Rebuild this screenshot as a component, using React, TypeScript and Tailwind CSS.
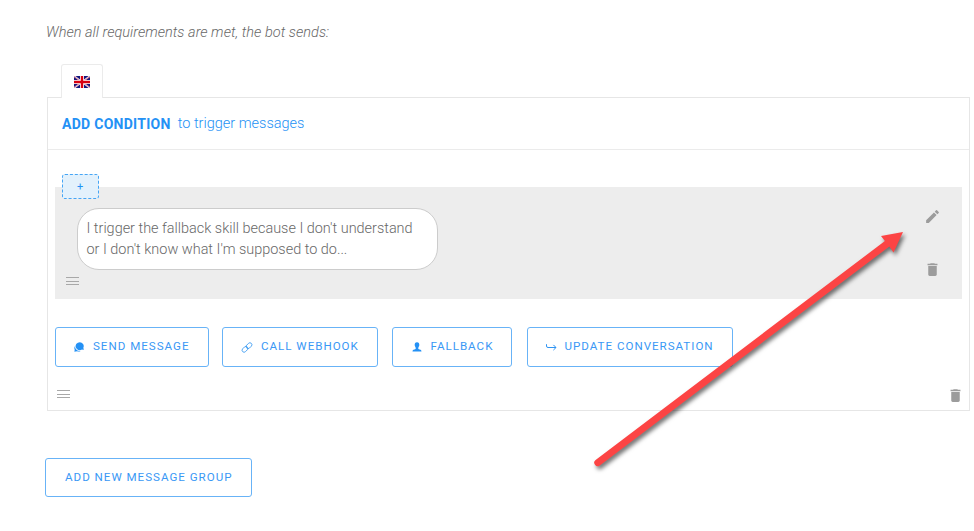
import type { ReactNode } from 'react';
import { MdDelete, MdEdit } from 'react-icons/md';

function UkFlag() {
  return (
    <svg className="block h-3 w-4" viewBox="0 0 16 12">
      <rect width="16" height="12" fill="#14147a" />
      <path d="M0 0L16 12M16 0L0 12" stroke="#e6e4f2" strokeWidth="1.7" />
      <path d="M0 0.4L6 5M16 11.6L10 7M16 0.4L10 5M0 11.6L6 7" stroke="#e0364a" strokeWidth="0.6" />
      <path d="M8 0V12M0 6H16" stroke="#fff" strokeWidth="4" />
      <path d="M8 0V12M0 6H16" stroke="#d80010" strokeWidth="2.4" />
    </svg>
  );
}

function DragHandle() {
  return (
    <div className="flex h-2 w-[13px] flex-col justify-between">
      <div className="h-px bg-[#a8a8a8]" />
      <div className="h-px bg-[#a8a8a8]" />
      <div className="h-px bg-[#a8a8a8]" />
    </div>
  );
}

function ChatIcon() {
  return (
    <svg className="h-2.5 w-2.5 shrink-0" viewBox="0 0 10 10" fill="#2491f5">
      <path d="M5.8 0.2A4 3.9 0 0 1 9.4 5.6L9.7 8L8 7.6A4.2 4 0 1 1 5.8 0.2Z" />
      <path d="M1 3.9A4.6 4.6 0 0 0 6.6 8.9Q5.1 9.8 3.1 9.3L0.4 9.8L0.7 7.7Q-0.2 5.9 1 3.9Z" />
    </svg>
  );
}

function LinkIcon() {
  return (
    <svg className="h-[11px] w-2.5 shrink-0 overflow-visible" viewBox="0 0 10 10" fill="none" stroke="#3d9cf2" strokeWidth="0.85">
      <rect x="3.7" y="1.2" width="6.6" height="4" rx="2" transform="rotate(-45 7 3.2)" />
      <rect x="-0.3" y="4.8" width="6.6" height="4" rx="2" transform="rotate(-45 3 6.8)" />
    </svg>
  );
}

function PersonIcon() {
  return (
    <svg className="h-2.5 w-2.5 shrink-0" viewBox="0 0 10 10" fill="#2491f5">
      <path d="M5 0.3C6.7 0.3 7.4 1.5 7.3 3C7.2 4.4 6.5 5 6.3 5.7C6.1 6.8 6.5 7.2 7.6 7.5C8.9 7.8 9.4 8.2 9.5 9.5H0.5C0.6 8.2 1.1 7.8 2.4 7.5C3.5 7.2 3.9 6.8 3.7 5.7C3.5 5 2.8 4.4 2.7 3C2.6 1.5 3.3 0.3 5 0.3Z" />
    </svg>
  );
}

function ForwardIcon() {
  return (
    <svg className="h-2.5 w-2.5 shrink-0 overflow-visible" viewBox="0 0 10 10" fill="none" stroke="#2f94f3" strokeWidth="1">
      <path d="M0.5 2.2V4Q0.5 5.5 2 5.5H10M7.4 2.9L10 5.5L7.4 8.1" />
    </svg>
  );
}

function ActionButton({ icon, label, size }: { icon?: ReactNode; label: string; size: string }) {
  return (
    <button
      className={`flex shrink-0 items-center gap-[9px] rounded-[3px] border border-[#68b3f7] bg-white text-[11.6px] leading-none tracking-[0.98px] whitespace-nowrap text-[#3a98f5] ${size}`}
    >
      {icon}
      {label}
    </button>
  );
}

function Arrow() {
  return (
    <svg
      className="pointer-events-none absolute top-0 left-0 h-[531px] w-[974px] drop-shadow-[2px_3px_2px_rgba(0,0,0,0.55)]"
      viewBox="0 0 974 531"
      fill="#fc4444"
    >
      <path d="M903 232L893.5 252.5L889.3 246.6L599.8 465.4A3.4 3.4 0 0 1 595.6 460L884.9 241L881 236Z" />
    </svg>
  );
}

export default function App() {
  return (
    <div className="relative h-[531px] w-[974px] overflow-hidden bg-white font-[Roboto,sans-serif] text-[#757575]">
      <p className="ml-[46px] pt-[23px] text-[14.5px] leading-5 font-light tracking-[0.035px] text-[#686868] italic">
        When all requirements are met, the bot sends:
      </p>

      <div className="mt-[21px] ml-[47px] w-[923px]">
        <div className="relative z-10 -mb-px ml-3.5 flex h-[34px] w-[42px] items-center justify-center rounded-t-[3px] border border-b-0 border-[#ebebeb] bg-white pt-px">
          <UkFlag />
        </div>

        <section className="h-[314px] border border-[#e6e6e6]">
          <header className="flex h-[52px] items-center gap-[7px] border-b border-[#ebebeb] pt-px pl-3.5 text-[14.5px]">
            <span className="text-[14px] font-bold tracking-[0.28px] text-[#2491f5]">ADD CONDITION</span>
            <span className="font-light text-[#2491f5]">to trigger messages</span>
          </header>

          <div className="mx-[7px] mt-[37px] flex h-28 justify-between bg-[#ededed]">
            <div className="flex flex-col">
              <button className="-mt-[13px] ml-[7px] flex h-[25px] w-[37px] shrink-0 items-center justify-center rounded-[3px] border border-dashed border-[#45a5f5] bg-[#e3f1fc] pt-px pr-px text-[11px] text-[#2491f5]">
                +
              </button>
              <div className="mt-[9px] ml-[22px] h-[62px] w-[361px] shrink-0 rounded-[22px] border border-[#cccccc] bg-white pt-[9px] pl-[8.5px] text-[14.44px] leading-[21px] font-light text-[#686868]">
                I trigger the fallback skill because I don't understand
                <br />
                or I don't know what I'm supposed to do...
              </div>
              <div className="mt-[7px] ml-[10.5px]">
                <DragHandle />
              </div>
            </div>
            <div className="flex flex-col gap-9 pt-[21px] pr-[21px] text-[#9c9c9c]">
              <MdEdit size={17} />
              <MdDelete size={17} />
            </div>
          </div>

          <div className="mt-7 ml-[7px] flex h-10">
            <ActionButton icon={<ChatIcon />} label="SEND MESSAGE" size="mr-[13px] h-10 w-[154px] pl-[18px]" />
            <ActionButton icon={<LinkIcon />} label="CALL WEBHOOK" size="mr-3.5 h-10 w-[156px] pl-[19px]" />
            <ActionButton icon={<PersonIcon />} label="FALLBACK" size="mr-[15px] h-10 w-[120px] pl-[18.5px]" />
            <ActionButton icon={<ForwardIcon />} label="UPDATE CONVERSATION" size="h-10 w-[206px] pl-[17.5px]" />
          </div>

          <div className="mt-5 flex items-center justify-between pr-[5.5px] pl-[9px] text-[#9c9c9c]">
            <div className="-mt-[3px]">
              <DragHandle />
            </div>
            <MdDelete size={17} />
          </div>
        </section>
      </div>

      <div className="mt-[47px] ml-[45px]">
        <ActionButton label="ADD NEW MESSAGE GROUP" size="h-[39px] w-[207px] pl-[19px]" />
      </div>
      <Arrow />
    </div>
  );
}
